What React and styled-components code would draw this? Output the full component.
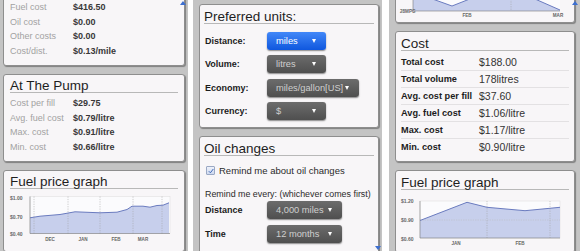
import React from "react";
import styled, { createGlobalStyle } from "styled-components";

const GlobalStyle = createGlobalStyle`
  html, body {
    margin: 0;
    padding: 0;
    background: #fff;
  }
  body {
    font-family: "Liberation Sans", Arial, sans-serif;
  }
`;

const Page = styled.div`
  display: flex;
  width: 580px;
  height: 251px;
  overflow: hidden;
  background: #fff;
`;

const Screen = styled.div`
  position: relative;
  flex: 0 0 ${(p) => p.$w}px;
  margin-left: ${(p) => p.$ml || 0}px;
  height: 251px;
  box-sizing: border-box;
  padding: ${(p) => p.$pt || 0}px ${(p) => p.$pr}px 0 ${(p) => p.$pl}px;
  overflow: hidden;
  background: #c4c4c4;
  display: flex;
  flex-direction: column;
  gap: 8px;
`;

const Card = styled.div`
  flex: none;
  margin-top: ${(p) => p.$mt || 0}px;
  padding: ${(p) => p.$pt ?? 4.5}px 0 ${(p) => p.$pb || 0}px;
  background: #f8f6f8;
  border: 1px solid #8e8e8e;
  border-radius: 3px;
  box-shadow: 1px 1px 1px rgba(0, 0, 0, 0.35);
`;

const Title = styled.div`
  margin: 0 ${(p) => p.$inset}px;
  height: 13px;
  line-height: 13px;
  font-size: 13.5px;
  color: #1e1e1e;
  border-bottom: 1px solid #b8b8b8;
  white-space: nowrap;
`;

const StatList = styled.div`
  padding: ${(p) => p.$pt}px ${(p) => p.$inset}px 0;
`;

const StatRow = styled.div`
  display: flex;
  height: 14.7px;
  line-height: 14.7px;
  font-size: 9px;
  white-space: nowrap;
`;

const StatLabel = styled.span`
  flex: none;
  width: 63px;
  color: #a2a2a2;
`;

const StatValue = styled.span`
  color: #383838;
  font-weight: bold;
`;

const UnitList = styled.div`
  padding: 5.8px 5px 0;
`;

const UnitRow = styled.div`
  display: flex;
  align-items: center;
  height: ${(p) => p.$h || 23.33}px;
`;

const FieldLabel = styled.span`
  flex: none;
  width: 62px;
  font-size: 9px;
  font-weight: bold;
  color: #1c1c1c;
`;

const Select = styled.div`
  display: flex;
  align-items: center;
  justify-content: space-between;
  width: ${(p) => p.$w}px;
  height: 18px;
  box-sizing: border-box;
  padding: 0 10px 0 9px;
  border-radius: 3px;
  font-size: 9.3px;
  white-space: nowrap;
  color: ${(p) => (p.$active ? "#fff" : "#cfcfcf")};
  background: ${(p) =>
    p.$active
      ? "linear-gradient(#4288f8, #0f57de)"
      : "linear-gradient(#6c6c6c, #4f4f4f)"};
  box-shadow: 0 1px 1.5px rgba(0, 0, 0, 0.45);
`;

const Caret = styled.span`
  width: 0;
  height: 0;
  border-left: 2.5px solid transparent;
  border-right: 2.5px solid transparent;
  border-top: 4px solid #fff;
`;

const CheckRow = styled.div`
  display: flex;
  align-items: center;
  gap: 4px;
  height: 14px;
  margin: 8px 5px 0 6px;
  font-size: 9.5px;
  color: #2a2a2a;
`;

const Checkbox = styled.span`
  width: 7px;
  height: 7px;
  border: 1px solid #9aa8c4;
  border-radius: 1px;
  background: linear-gradient(#eef2fb, #cfd9ef);
  display: flex;
  align-items: center;
  justify-content: center;
`;

const Note = styled.div`
  height: 12px;
  line-height: 12px;
  margin: 10px 5px 0;
  font-size: 8.9px;
  color: #2a2a2a;
  white-space: nowrap;
`;

const OilList = styled.div`
  display: flex;
  flex-direction: column;
  gap: 4px;
  padding: 0 5px;
`;

const CostList = styled.div`
  padding: 3px 5px 0;
`;

const CostRow = styled.div`
  display: flex;
  align-items: center;
  height: 17px;
  box-sizing: border-box;
  border-bottom: ${(p) => (p.$last ? "none" : "1px solid #e3e1e3")};
  white-space: nowrap;
`;

const CostLabel = styled.span`
  flex: none;
  width: 78px;
  font-size: 9.2px;
  font-weight: bold;
  color: #1c1c1c;
`;

const CostValue = styled.span`
  font-size: 10.5px;
  color: #333;
`;

const Chart = styled.svg`
  display: block;
`;

const ScrollArrow = styled.span`
  position: absolute;
  ${(p) => (p.$down ? "bottom: 1px;" : "top: 1px;")}
  right: ${(p) => p.$r}px;
  width: 0;
  height: 0;
  border-left: 3px solid transparent;
  border-right: 3px solid transparent;
  ${(p) =>
    p.$down
      ? "border-top: 4px solid #3d6fd0;"
      : "border-bottom: 4px solid #3d6fd0;"}
`;

const axisText = {
  fontSize: 5,
  fontWeight: "bold",
  fill: "#666",
  fontFamily: "Liberation Sans, Arial, sans-serif",
};

function PriceChart({ viewBox, width, box, vlines, hlines, line, yLabels, months }) {
  const [x0, y0, x1, y1] = box;
  const pts = line.map((p) => p.join(",")).join(" ");
  const area = `${line[0][0]},${y1} ${pts} ${line[line.length - 1][0]},${y1}`;
  return (
    <Chart width={width} height={62} viewBox={viewBox}>
      <rect x={x0} y={y0} width={x1 - x0} height={y1 - y0} fill="#fbfbfd" stroke="#dcdcdc" strokeWidth="0.5" />
      <polygon points={area} fill="#c7cfec" />
      {vlines.map((x) => (
        <line key={x} x1={x} y1={y0} x2={x} y2={y1} stroke="#9c9c9c" strokeWidth="0.5" strokeDasharray="1.2 1.2" />
      ))}
      {hlines.map((y) => (
        <line key={y} x1={x0} y1={y} x2={x1} y2={y} stroke="#b8b8b8" strokeWidth="0.5" strokeDasharray="1.2 1.2" />
      ))}
      <polyline points={pts} fill="none" stroke="#6a7bbf" strokeWidth="1" />
      <line x1={x0} y1={y0} x2={x0} y2={y1} stroke="#7a7a7a" strokeWidth="0.6" />
      <line x1={x0} y1={y1} x2={x1} y2={y1} stroke="#7a7a7a" strokeWidth="0.6" />
      {yLabels.map(([t, x, y]) => (
        <text key={t} x={x} y={y} style={axisText}>{t}</text>
      ))}
      {months.map(([t, x, y]) => (
        <text key={t} x={x} y={y} textAnchor="middle" style={{ ...axisText, fontSize: 4.6 }}>{t}</text>
      ))}
    </Chart>
  );
}

function EconomyTail() {
  const line = [[413, -8], [452, 6], [490, -9], [510, -12], [560, 10]];
  const pts = line.map((p) => p.join(",")).join(" ");
  return (
    <Chart width={178} height={51} viewBox="396 -29 178 51">
      <rect x="413" y="-25" width="147" height="36" fill="#fbfbfd" />
      <polygon points={`413,11 ${pts} 560,11`} fill="#c7cfec" />
      <line x1="511" y1="-25" x2="511" y2="11" stroke="#9c9c9c" strokeWidth="0.5" strokeDasharray="1.2 1.2" />
      <polyline points={pts} fill="none" stroke="#6a7bbf" strokeWidth="1" />
      <line x1="413" y1="-25" x2="413" y2="11" stroke="#7a7a7a" strokeWidth="0.6" />
      <line x1="413" y1="11" x2="560" y2="11" stroke="#7a7a7a" strokeWidth="0.6" />
      <text x="400" y="12.5" style={{ ...axisText, fontSize: 4.6 }}>28MPG</text>
      <text x="467" y="16.5" textAnchor="middle" style={{ ...axisText, fontSize: 4.6 }}>FEB</text>
      <text x="558" y="16.5" textAnchor="middle" style={{ ...axisText, fontSize: 4.6 }}>MAR</text>
    </Chart>
  );
}

const summary = [
  ["Fuel cost", "$416.50"],
  ["Oil cost", "$0.00"],
  ["Other costs", "$0.00"],
  ["Cost/dist.", "$0.13/mile"],
];

const pump = [
  ["Cost per fill", "$29.75"],
  ["Avg. fuel cost", "$0.79/litre"],
  ["Max. cost", "$0.91/litre"],
  ["Min. cost", "$0.66/litre"],
];

const units = [
  ["Distance:", "miles", 59, true],
  ["Volume:", "litres", 59],
  ["Economy:", "miles/gallon[US]", 92],
  ["Currency:", "$", 59],
];

const costs = [
  ["Total cost", "$188.00"],
  ["Total volume", "178litres"],
  ["Avg. cost per fill", "$37.60"],
  ["Avg. fuel cost", "$1.06/litre"],
  ["Max. cost", "$1.17/litre"],
  ["Min. cost", "$0.90/litre"],
];

function Stats({ rows, pt }) {
  return (
    <StatList $pt={pt} $inset={6}>
      {rows.map(([l, v]) => (
        <StatRow key={l}>
          <StatLabel>{l}</StatLabel>
          <StatValue>{v}</StatValue>
        </StatRow>
      ))}
    </StatList>
  );
}

export default function App() {
  return (
    <>
      <GlobalStyle />
      <Page>
        <Screen $w={188} $pl={3} $pr={3}>
          <Card $mt={-4} $pt={3} $pb={6.2}>
            <Stats rows={summary} pt={0} />
          </Card>
          <Card $pb={6.2}>
            <Title $inset={6}>At The Pump</Title>
            <Stats rows={pump} pt={2.5} />
          </Card>
          <Card>
            <Title $inset={6}>Fuel price graph</Title>
            <PriceChart
              viewBox="4 189.5 180 62"
              width={180}
              box={[30, 197, 170, 234]}
              vlines={[34, 68, 100, 133, 162]}
              hlines={[]}
              line={[[30, 218.3], [40, 216.7], [60, 215], [75, 212.3], [100, 213.3], [117, 212.7], [127, 210], [132, 206.7], [143, 206.7], [150, 207.7], [157, 206], [163, 205.7], [169, 203.3]]}
              yLabels={[["$1.00", 10, 200], ["$0.70", 10, 219], ["$0.40", 10, 236.5]]}
              months={[["DEC", 50, 241.5], ["JAN", 83, 241.5], ["FEB", 116, 241.5], ["MAR", 143, 241.5]]}
            />
          </Card>
          <ScrollArrow $r={2} />
        </Screen>

        <Screen $w={189} $ml={5} $pl={6} $pr={3} $pt={4}>
          <Card $pb={4.4}>
            <Title $inset={4}>Preferred units:</Title>
            <UnitList>
              {units.map(([l, v, w, active]) => (
                <UnitRow key={l}>
                  <FieldLabel>{l}</FieldLabel>
                  <Select $w={w} $active={active}>
                    {v}
                    <Caret />
                  </Select>
                </UnitRow>
              ))}
            </UnitList>
          </Card>
          <Card $pb={10}>
            <Title $inset={4}>Oil changes</Title>
            <CheckRow>
              <Checkbox>
                <svg width="6" height="6" viewBox="0 0 6 6">
                  <path d="M0.8 3.2 L2.4 4.8 L5.3 1" fill="none" stroke="#3f68b8" strokeWidth="1" />
                </svg>
              </Checkbox>
              Remind me about oil changes
            </CheckRow>
            <Note>Remind me every: (whichever comes first)</Note>
            <OilList>
              <UnitRow $h={20}>
                <FieldLabel>Distance</FieldLabel>
                <Select $w={75}>
                  4,000 miles
                  <Caret />
                </Select>
              </UnitRow>
              <UnitRow $h={20}>
                <FieldLabel>Time</FieldLabel>
                <Select $w={75}>
                  12 months
                  <Caret />
                </Select>
              </UnitRow>
            </OilList>
          </Card>
          <ScrollArrow $r={1} $down />
        </Screen>

        <Screen $w={191} $ml={7} $pl={6} $pr={5}>
          <Card $mt={-30} $pt={0}>
            <EconomyTail />
          </Card>
          <Card $pb={5.5}>
            <Title $inset={5}>Cost</Title>
            <CostList>
              {costs.map(([l, v], i) => (
                <CostRow key={l} $last={i === costs.length - 1}>
                  <CostLabel>{l}</CostLabel>
                  <CostValue>{v}</CostValue>
                </CostRow>
              ))}
            </CostList>
          </Card>
          <Card $pb={0}>
            <Title $inset={5}>Fuel price graph</Title>
            <PriceChart
              viewBox="396 189.5 178 57"
              width={178}
              box={[420, 198, 560, 235]}
              vlines={[487, 550]}
              hlines={[217]}
              line={[[420, 217.5], [467, 199.3], [487, 204.3], [525, 207.7], [560, 204.3]]}
              yLabels={[["$1.20", 401, 200], ["$0.90", 401, 219], ["$0.60", 401, 237.5]]}
              months={[["JAN", 456, 241.5], ["FEB", 520, 241.5]]}
            />
          </Card>
          <ScrollArrow $r={2} />
        </Screen>
      </Page>
    </>
  );
}
